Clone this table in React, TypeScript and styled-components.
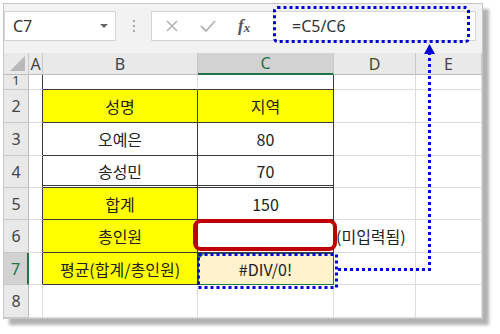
import styled, { createGlobalStyle } from "styled-components";

const GlobalStyle = createGlobalStyle`
  html, body {
    margin: 0;
    padding: 0;
    background: #ffffff;
  }
  body {
    font-family: "Noto Sans", "Noto Sans CJK KR", sans-serif;
  }
`;

const Frame = styled.div`
  position: relative;
  width: 500px;
  height: 334px;
  padding: 3px 0 0 3px;
  box-sizing: border-box;
  overflow: hidden;
`;

const Window = styled.div`
  width: 480px;
  height: 316px;
  box-sizing: border-box;
  border: 1px solid #c6c6c6;
  background: #f2f2f2;
  box-shadow: 6px 6px 3px rgba(0, 0, 0, 0.3);
  display: flex;
  flex-direction: column;
  overflow: hidden;
`;

/* ---------- formula bar ---------- */

const FormulaBar = styled.div`
  height: 49px;
  display: flex;
  align-items: flex-start;
  padding-top: 7px;
  box-sizing: border-box;
`;

const NameBox = styled.div`
  width: 112px;
  height: 30px;
  box-sizing: border-box;
  background: #fff;
  border: 1px solid #d4d4d4;
  display: flex;
  align-items: center;
  justify-content: space-between;
  padding: 0 7px 0 8px;
  font-size: 16px;
  color: #333;
`;

const Caret = styled.span`
  width: 0;
  height: 0;
  border-left: 4px solid transparent;
  border-right: 4px solid transparent;
  border-top: 4px solid #666;
`;

const Grip = styled.div`
  width: 35px;
  height: 30px;
  display: flex;
  flex-direction: column;
  align-items: center;
  justify-content: center;
  gap: 3px;

  span {
    width: 2px;
    height: 2px;
    background: #a8a8a8;
  }
`;

const FxBox = styled.div`
  width: 122px;
  height: 30px;
  box-sizing: border-box;
  background: #fff;
  border: 1px solid #d4d4d4;
  border-right: none;
  display: flex;
  align-items: center;
  padding-left: 13px;
  gap: 20px;
`;

const FxLabel = styled.span`
  font-family: "Liberation Serif", serif;
  font-style: italic;
  font-weight: bold;
  font-size: 17px;
  color: #555;
  margin-left: 1px;

  sub {
    font-size: 13px;
    vertical-align: -1px;
  }
`;

const FormulaInput = styled.div`
  flex: 1;
  height: 30px;
  box-sizing: border-box;
  background: #fff;
  border: 1px solid #d4d4d4;
  border-left: 1px solid #e4e4e4;
  margin-right: 6px;
  display: flex;
  align-items: center;
  padding-left: 18px;
  font-size: 16px;
  color: #333;
`;

/* ---------- sheet ---------- */

const Sheet = styled.div`
  display: grid;
  grid-template-columns: 25px 14px 155px 136px 82px 66px;
  grid-template-rows: 22px 15px 33px 33px 32px 32px 33px 32px 33px;
  background: #fff;
`;

const ColHead = styled.div<{ $active?: boolean }>`
  box-sizing: border-box;
  display: flex;
  align-items: center;
  justify-content: center;
  font-size: 16px;
  color: ${({ $active }) => ($active ? "#217346" : "#444")};
  background: ${({ $active }) => ($active ? "#d2d2d2" : "#e9e9e9")};
  border-right: 1px solid #c9c9c9;
  border-bottom: ${({ $active }) =>
    $active ? "2px solid #217346" : "1px solid #bcbcbc"};
  overflow: hidden;
`;

const Corner = styled(ColHead)`
  align-items: flex-end;
  justify-content: flex-end;
  padding: 0 3px 3px 0;
`;

const RowHead = styled.div<{ $active?: boolean }>`
  box-sizing: border-box;
  display: flex;
  align-items: center;
  justify-content: center;
  font-size: 16px;
  color: ${({ $active }) => ($active ? "#217346" : "#444")};
  background: ${({ $active }) => ($active ? "#d2d2d2" : "#e9e9e9")};
  border-bottom: 1px solid #c9c9c9;
  border-right: ${({ $active }) =>
    $active ? "2px solid #217346" : "1px solid #bcbcbc"};
  overflow: hidden;
`;

/* row 1 is scrolled half out of view, only the foot of its number shows */
const CutRowHead = styled(RowHead)`
  align-items: flex-end;
  font-size: 13px;
  line-height: 13px;
  padding-bottom: 2px;
`;

type Edge = "grid" | "dark" | "double";

const edge = (e: Edge = "grid") =>
  e === "dark"
    ? "1px solid #3a3a3a"
    : e === "double"
    ? "3px double #3a3a3a"
    : "1px solid #dcdcdc";

const Cell = styled.div<{
  $fill?: string;
  $right?: Edge;
  $bottom?: Edge;
  $align?: "left" | "center";
}>`
  box-sizing: border-box;
  position: relative;
  display: flex;
  align-items: center;
  justify-content: ${({ $align }) =>
    $align === "left" ? "flex-start" : "center"};
  padding-left: ${({ $align }) => ($align === "left" ? "2px" : "0")};
  background: ${({ $fill }) => $fill ?? "#fff"};
  border-right: ${({ $right }) => edge($right)};
  border-bottom: ${({ $bottom }) => edge($bottom)};
  font-family: "Noto Sans CJK KR", "Noto Sans", sans-serif;
  font-size: 16px;
  color: #222;
  white-space: nowrap;
`;

const ErrorCell = styled(Cell)`
  outline: 1px solid #217346;
  outline-offset: -1px;

  &::before {
    content: "";
    position: absolute;
    left: 1px;
    top: 1px;
    border-top: 5px solid #2e8b3e;
    border-right: 5px solid transparent;
  }
`;

const Marks = styled.svg`
  position: absolute;
  left: 0;
  top: 0;
  pointer-events: none;
`;

const YELLOW = "#ffff00";
const BLUE = "#0000dd";

export default function App() {
  return (
    <>
      <GlobalStyle />
      <Frame>
        <Window>
          <FormulaBar>
            <NameBox>
              C7
              <Caret />
            </NameBox>
            <Grip>
              <span />
              <span />
              <span />
            </Grip>
            <FxBox>
              <svg width="14" height="14" viewBox="0 0 14 14">
                <path d="M2 2 L12 12 M12 2 L2 12" stroke="#b4b4b4" strokeWidth="1.6" fill="none" />
              </svg>
              <svg width="18" height="14" viewBox="0 0 18 14">
                <path d="M2 7 L7 12 L16 2" stroke="#b4b4b4" strokeWidth="1.8" fill="none" />
              </svg>
              <FxLabel>
                f<sub>x</sub>
              </FxLabel>
            </FxBox>
            <FormulaInput>=C5/C6</FormulaInput>
          </FormulaBar>

          <Sheet>
            {/* column headers */}
            <Corner>
              <svg width="15" height="15" viewBox="0 0 15 15">
                <polygon points="15,0 15,15 0,15" fill="#b9b9b9" />
              </svg>
            </Corner>
            <ColHead>A</ColHead>
            <ColHead>B</ColHead>
            <ColHead $active>C</ColHead>
            <ColHead>D</ColHead>
            <ColHead>E</ColHead>

            {/* row 1 */}
            <CutRowHead>1</CutRowHead>
            <Cell $right="dark" />
            <Cell $bottom="dark" />
            <Cell $bottom="dark" $right="dark" />
            <Cell />
            <Cell />

            {/* row 2 */}
            <RowHead>2</RowHead>
            <Cell $right="dark" />
            <Cell $fill={YELLOW} $right="dark" $bottom="dark">성명</Cell>
            <Cell $fill={YELLOW} $right="dark" $bottom="dark">지역</Cell>
            <Cell />
            <Cell />

            {/* row 3 */}
            <RowHead>3</RowHead>
            <Cell $right="dark" />
            <Cell $right="dark" $bottom="dark">오예은</Cell>
            <Cell $right="dark" $bottom="dark">80</Cell>
            <Cell />
            <Cell />

            {/* row 4 */}
            <RowHead>4</RowHead>
            <Cell $right="dark" />
            <Cell $right="dark" $bottom="double">송성민</Cell>
            <Cell $right="dark" $bottom="double">70</Cell>
            <Cell />
            <Cell />

            {/* row 5 */}
            <RowHead>5</RowHead>
            <Cell $right="dark" />
            <Cell $fill={YELLOW} $right="dark" $bottom="dark">합계</Cell>
            <Cell $right="dark" $bottom="dark">150</Cell>
            <Cell />
            <Cell />

            {/* row 6 */}
            <RowHead>6</RowHead>
            <Cell $right="dark" />
            <Cell $fill={YELLOW} $right="dark" $bottom="dark">총인원</Cell>
            <Cell $right="dark" $bottom="dark" />
            <Cell $align="left">(미입력됨)</Cell>
            <Cell />

            {/* row 7 */}
            <RowHead $active>7</RowHead>
            <Cell $right="dark" />
            <Cell $fill={YELLOW} $right="dark" $bottom="dark">평균(합계/총인원)</Cell>
            <ErrorCell $fill="#fff2cc" $right="dark" $bottom="dark">#DIV/0!</ErrorCell>
            <Cell />
            <Cell />

            {/* row 8 */}
            <RowHead>8</RowHead>
            <Cell />
            <Cell />
            <Cell />
            <Cell />
            <Cell />
          </Sheet>
        </Window>

        {/* callouts: empty input cell, error cell and its formula */}
        <Marks width="500" height="334" viewBox="0 0 500 334">
          <rect x="195" y="221" width="140" height="28" rx="6" fill="none" stroke="#c00000" strokeWidth="4" />
          <rect x="274.5" y="7.5" width="194" height="34" rx="3" fill="none" stroke={BLUE} strokeWidth="3" strokeDasharray="3 3" />
          <rect x="198.5" y="254.5" width="138" height="33" fill="none" stroke={BLUE} strokeWidth="3" strokeDasharray="3 3" />
          <path d="M338 269.5 H429.5 V54" fill="none" stroke={BLUE} strokeWidth="3" strokeDasharray="3 3" />
          <polygon points="429.5,44 424,54 435,54" fill={BLUE} />
        </Marks>
      </Frame>
    </>
  );
}
